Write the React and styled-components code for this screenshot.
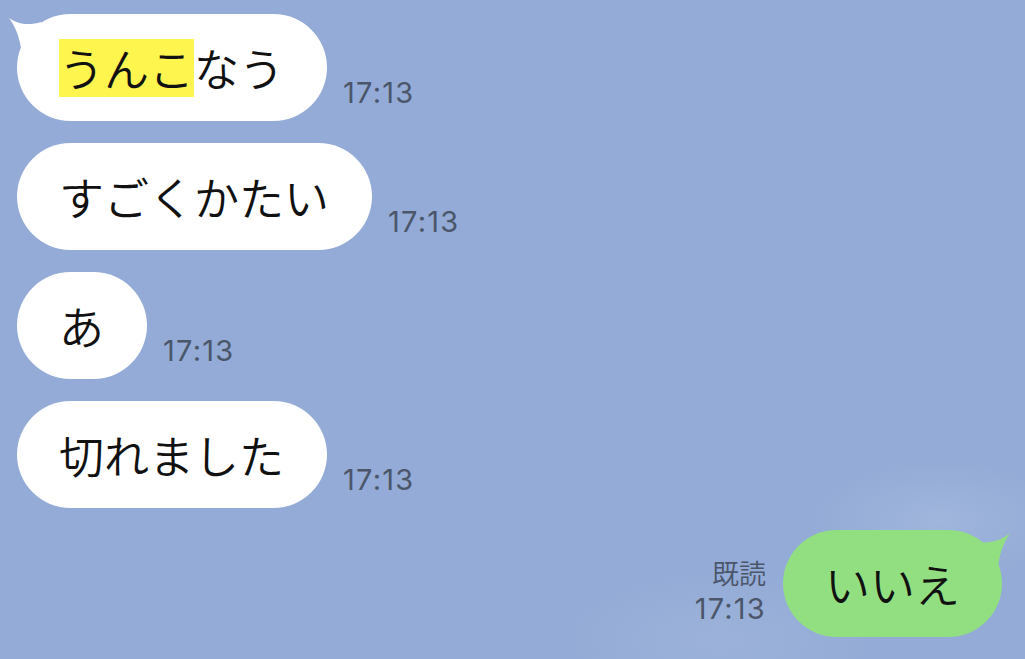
import React from "react";
import styled, { createGlobalStyle } from "styled-components";

const Global = createGlobalStyle`
  html, body { margin: 0; padding: 0; }
  body {
    width: 1025px;
    height: 659px;
    overflow: hidden;
    background: #93abd6;
    font-family: "Noto Sans CJK JP", "Noto Sans", sans-serif;
  }
`;

const Screen = styled.div`
  position: relative;
  width: 1025px;
  height: 659px;
  box-sizing: border-box;
  padding: 14px 23px 0 17px;
  display: flex;
  flex-direction: column;
  gap: 22px;
  background:
    radial-gradient(ellipse 130px 60px at 940px 520px, rgba(170, 190, 225, 0.55), rgba(170, 190, 225, 0) 100%),
    radial-gradient(ellipse 160px 70px at 720px 640px, rgba(165, 185, 222, 0.5), rgba(165, 185, 222, 0) 100%),
    #93abd6;
`;

const Row = styled.div`
  display: flex;
  align-items: flex-end;
  justify-content: ${(p) => (p.$mine ? "flex-end" : "flex-start")};
  gap: ${(p) => (p.$mine ? "17px" : "16px")};
`;

const Bubble = styled.div`
  position: relative;
  height: 107px;
  box-sizing: border-box;
  padding: 0 ${(p) => (p.$mine ? "42px" : "43px")} 0 42px;
  border-radius: 54px;
  background: ${(p) => (p.$mine ? "#92df82" : "#ffffff")};
  display: flex;
  align-items: center;
  font-size: 45px;
  font-weight: 350;
  line-height: 1;
  color: #111;
  white-space: nowrap;
`;

const Mark = styled.span`
  background: #fff54f;
  padding: 6px 0 7px;
`;

const Tail = styled.svg`
  position: absolute;
  top: 0;
  ${(p) => (p.$right ? "right: -10px;" : "left: -10px;")}
  width: 40px;
  height: 40px;
  overflow: visible;
`;

const Meta = styled.div`
  display: flex;
  flex-direction: column;
  align-items: flex-end;
  gap: 8px;
  margin-bottom: 14px;
  color: #4b566a;
  font-family: "Inter", "Noto Sans", "Noto Sans CJK JP", sans-serif;
`;

const Read = styled.span`
  font-size: 27px;
  font-weight: 350;
  line-height: 1;
  font-family: "Noto Sans CJK JP", sans-serif;
`;

const Time = styled.span`
  font-size: 29px;
  line-height: 1;
  letter-spacing: 1.2px;
`;

function LeftTail() {
  return (
    <Tail viewBox="0 0 40 40">
      <path d="M2 4 C 10 10, 22 12, 34 8 L 36 30 C 26 32, 16 34, 14 34 C 12 22, 8 12, 2 4 Z" fill="#ffffff" />
    </Tail>
  );
}

function RightTail() {
  return (
    <Tail viewBox="0 0 40 40" $right>
      <path d="M38 3 C 30 10, 18 14, 6 12 L 4 32 C 14 34, 22 34, 26 36 C 28 22, 32 12, 38 3 Z" fill="#92df82" />
    </Tail>
  );
}

const messages = [
  { id: 1, text: null, tail: true },
  { id: 2, text: "すごくかたい" },
  { id: 3, text: "あ" },
  { id: 4, text: "切れました" },
];

export default function App() {
  return (
    <>
      <Global />
      <Screen>
        {messages.map((m) => (
          <Row key={m.id}>
            <Bubble>
              {m.tail && <LeftTail />}
              {m.text ?? (
                <>
                  <Mark>うんこ</Mark>なう
                </>
              )}
            </Bubble>
            <Meta>
              <Time>17:13</Time>
            </Meta>
          </Row>
        ))}
        <Row $mine>
          <Meta>
            <Read>既読</Read>
            <Time>17:13</Time>
          </Meta>
          <Bubble $mine>
            <RightTail />
            いいえ
          </Bubble>
        </Row>
      </Screen>
    </>
  );
}
